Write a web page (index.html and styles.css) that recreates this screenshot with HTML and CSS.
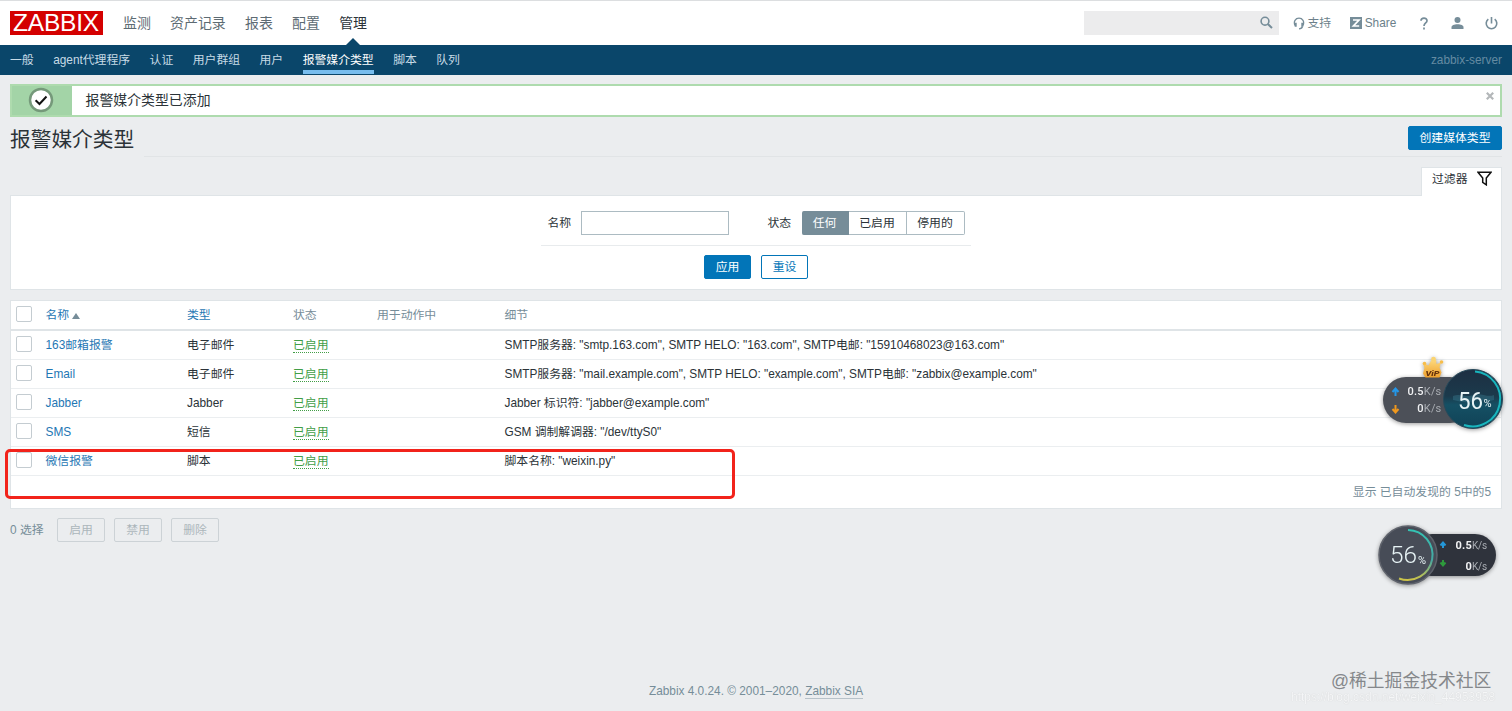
FILE: index.html
```html
<!DOCTYPE html>
<html lang="zh-CN">
<head>
<meta charset="utf-8">
<title>报警媒介类型</title>
<link rel="stylesheet" href="styles.css">
</head>
<body>
<header class="top">
  <div class="logo"><span>ZABBIX</span></div>
  <nav class="menu"><a>监测</a><a>资产记录</a><a>报表</a><a>配置</a><a class="active">管理</a></nav>
  <div class="search"><svg width="14" height="14" viewBox="0 0 14 14" fill="none" stroke="#768d99"><circle cx="6" cy="5.200" r="3.900" stroke-width="1.600"/><path d="M8.800 8L13 12" stroke-width="2"/></svg></div>
  <div class="tools">
    <a class="support"><svg width="12" height="13" viewBox="0 0 12 13" fill="none" stroke="#768d99" stroke-width="1.300"><path d="M2 8.500C.2 4.500 2.500 1.200 6 1.200S11.800 4.500 10 8.500"/><path d="M2.700 5.800v4M9.300 5.800v4" stroke-width="2"/><path d="M9.500 9.500C9 11.500 8 11.800 6 11.800"/></svg>支持</a>
    <a class="share"><svg width="12" height="12" viewBox="0 0 12 12"><path d="M0 0h12v12H0z" fill="#768d99"/><path d="M3 3h6L3.400 9H9.200" fill="none" stroke="#fff" stroke-width="1.700"/></svg>Share</a>
    <svg class="help" width="8" height="13" viewBox="0 0 8 13" fill="none" stroke="#768d99" stroke-width="1.700"><path d="M1 3.800C1 .3 7 .3 7 3.700 7 6 4 5.900 4 9"/><path d="M4 10.500v2"/></svg>
    <svg class="user" width="13" height="12" viewBox="0 0 13 12" fill="#768d99"><circle cx="6.500" cy="3" r="3"/><path d="M.5 12V10C.5 8.500 3 7.300 6.500 7.300S12.500 8.500 12.500 10v2z"/></svg>
    <svg class="power" width="13" height="13" viewBox="0 0 13 13" fill="none" stroke="#768d99" stroke-width="1.600"><path d="M3.300 2.200a5.300 5.300 0 1 0 6.400 0M6.500 0v6.500"/></svg>
  </div>
</header>
<nav class="sub">
  <a>一般</a><a>agent代理程序</a><a>认证</a><a>用户群组</a><a>用户</a><a class="active">报警媒介类型</a><a>脚本</a><a>队列</a>
  <span class="server">zabbix-server</span>
</nav>
<main>
  <div class="msg">
    <div class="msg-icon"><svg width="26" height="26" viewBox="0 0 26 26" fill="none"><circle cx="13" cy="13" r="11" fill="#fff" stroke="#75997a" stroke-width="2.500"/><path d="M7.600 13.200l3.900 3.800 7-7.500" stroke="#111" stroke-width="2"/></svg></div>
    <span class="msg-text">报警媒介类型已添加</span>
    <svg class="close" width="8" height="8" viewBox="0 0 8 8" stroke="#b3b7b9" stroke-width="2.200"><path d="M.8.8l6.400 6.400M7.200.8L.8 7.200"/></svg>
  </div>
  <div class="title"><h1>报警媒介类型</h1><div class="title-rest"><button class="btn create">创建媒体类型</button></div></div>
  <div class="tabs"><div class="tab">过滤器<svg width="15" height="15" viewBox="0 0 15 15" fill="none" stroke="#111" stroke-width="1.500"><path d="M1 1.200h13L9.300 7v6.800L5.700 11.300V7z"/></svg></div></div>
  <section class="filter">
    <div class="fields">
      <label class="name-label">名称</label><div class="input"></div>
      <label class="state-label">状态</label>
      <div class="radio"><span class="on">任何</span><span>已启用</span><span>停用的</span></div>
    </div>
    <div class="filter-btns"><button class="btn">应用</button><button class="btn alt">重设</button></div>
  </section>
  <section class="table">
    <div class="row head"><i class="cb"></i><a class="c1">名称<b class="sort"></b></a><a class="c2">类型</a><span class="c3">状态</span><span class="c4">用于动作中</span><span class="c5">细节</span></div>
    <div class="row"><i class="cb"></i><a class="c1">163邮箱报警</a><span class="c2">电子邮件</span><span class="c3"><a class="ok">已启用</a></span><span class="c4"></span><span class="c5">SMTP服务器: "smtp.163.com", SMTP HELO: "163.com", SMTP电邮: "15910468023@163.com"</span></div>
    <div class="row"><i class="cb"></i><a class="c1">Email</a><span class="c2">电子邮件</span><span class="c3"><a class="ok">已启用</a></span><span class="c4"></span><span class="c5">SMTP服务器: "mail.example.com", SMTP HELO: "example.com", SMTP电邮: "zabbix@example.com"</span></div>
    <div class="row"><i class="cb"></i><a class="c1">Jabber</a><span class="c2">Jabber</span><span class="c3"><a class="ok">已启用</a></span><span class="c4"></span><span class="c5">Jabber 标识符: "jabber@example.com"</span></div>
    <div class="row"><i class="cb"></i><a class="c1">SMS</a><span class="c2">短信</span><span class="c3"><a class="ok">已启用</a></span><span class="c4"></span><span class="c5">GSM 调制解调器: "/dev/ttyS0"</span></div>
    <div class="row"><i class="cb"></i><a class="c1">微信报警</a><span class="c2">脚本</span><span class="c3"><a class="ok">已启用</a></span><span class="c4"></span><span class="c5">脚本名称: "weixin.py"</span></div>
    <div class="paging">显示 已自动发现的 5中的5</div>
    <div class="highlight"></div>
  </section>
  <div class="actions"><span>0 选择</span><button>启用</button><button>禁用</button><button>删除</button></div>
</main>
<footer>Zabbix 4.0.24. © 2001–2020, <a>Zabbix SIA</a></footer>

<div class="widget w1">
  <svg width="124" height="80" viewBox="0 0 124 80">
    <defs>
      <linearGradient id="gold" x1="0" y1="0" x2="0" y2="1"><stop offset="0" stop-color="#ffe28a"/><stop offset="1" stop-color="#efa02c"/></linearGradient>
      <linearGradient id="sea" x1="0" y1="0" x2="0" y2="1"><stop offset="0" stop-color="#1d2f42"/><stop offset=".45" stop-color="#1b3a4c"/><stop offset=".6" stop-color="#155064"/><stop offset="1" stop-color="#104256"/></linearGradient>
    </defs>
    <rect x="3" y="22" width="90" height="46" rx="23" fill="#4c5058"/>
    <g transform="translate(1.500 0)">
      <path d="M43 13l-1.500-5 5.500 2.500 3-5.500 1.500-3 3 2.500.5 4.500 4.500-1.500-1.500 5 2 5-2 5H44l-2.500-4z" fill="url(#gold)"/>
      <circle cx="52" cy="4" r="2.300" fill="#fbd470"/><circle cx="43" cy="8.500" r="1.800" fill="#f7bd4a"/><circle cx="60" cy="7" r="1.800" fill="#f7bd4a"/>
      <text x="44" y="20.500" class="vip" textLength="14" lengthAdjust="spacingAndGlyphs">ViP</text>
    </g>
    <circle cx="93" cy="44" r="29.500" fill="url(#sea)" stroke="#27495a"/>
    <path d="M73 41c8-3 12 2 20-1s14 3 21 0v5c-8 3-14-2-21 1s-13 0-20-1z" fill="#38758a" opacity=".45"/>
    <path d="M95 16.500A27.500 27.500 0 1 1 84 70" fill="none" stroke="#18b5bd" stroke-width="2"/>
    <path d="M15.500 41v-7M12.500 37l3-3.500 3 3.500" fill="none" stroke="#2497e8" stroke-width="2"/>
    <path d="M15.500 50v7M12.500 54l3 3.500 3-3.500" fill="none" stroke="#f0981d" stroke-width="2"/>
    <text x="61.500" y="40" text-anchor="end" class="speed">0.5<tspan class="unit">K/s</tspan></text>
    <text x="61.500" y="57" text-anchor="end" class="speed">0<tspan class="unit">K/s</tspan></text>
    <text x="78" y="53.500" class="big" textLength="25" lengthAdjust="spacingAndGlyphs">56</text><text x="103.500" y="52" class="pct">%</text>
  </svg>
</div>
<div class="widget w2">
  <svg width="124" height="66" viewBox="0 0 124 66">
    <defs><linearGradient id="arc" x1="0" y1="0" x2="0" y2="1"><stop offset="0" stop-color="#34c3b4"/><stop offset=".6" stop-color="#46a7a2"/><stop offset="1" stop-color="#cfc447"/></linearGradient></defs>
    <rect x="36" y="12" width="85" height="42" rx="21" fill="#2f333c"/>
    <circle cx="33" cy="33" r="29" fill="#474c57" stroke="#5f636c" stroke-width="1.500"/>
    <path d="M33 8A25 25 0 1 1 24 56.500" fill="none" stroke="url(#arc)" stroke-width="2"/>
    <path d="M68 26v-5M65.500 23.500l2.500-3 2.500 3" fill="none" stroke="#2497d8" stroke-width="2"/>
    <path d="M68 38v5M65.500 40.500l2.500 3 2.500-3" fill="none" stroke="#2e9b3c" stroke-width="2"/>
    <text x="112" y="27" text-anchor="end" class="speed bold">0.5<tspan class="unit">K/s</tspan></text>
    <text x="112" y="48" text-anchor="end" class="speed bold">0<tspan class="unit">K/s</tspan></text>
    <text x="15" y="41" class="big light" textLength="27" lengthAdjust="spacingAndGlyphs">56</text><text x="43" y="42" class="pct">%</text>
  </svg>
</div>
<div class="mark-url">https://blog.csdn.net/weixin_44953958</div>
<div class="mark">@稀土掘金技术社区</div>
</body>
</html>
```
FILE: styles.css
```css
* { box-sizing: border-box; }
body {
  margin: 0; height: 711px; overflow: hidden; position: relative;
  display: flex; flex-direction: column;
  background: #ebedef; color: #2b3338;
  font: 11.85px/16px "Liberation Sans", "Noto Sans CJK SC", sans-serif;
}
button { font: inherit; margin: 0; padding: 0; white-space: nowrap; }
a { color: #1f77b4; }
svg { display: block; flex: none; }

.top { height: 45px; flex: none; display: flex; align-items: center; background: #fff; border-top: 1px solid #dcdee0; padding: 0 10px; }
.logo { width: 93px; height: 24px; background: #d40000; color: #fff; display: flex; align-items: center; justify-content: center; padding-right: 1px; }
.logo span { font-size: 24.500px; line-height: 24px; letter-spacing: -.2px; }
.menu { display: flex; gap: 19.200px; margin-left: 20px; font-size: 13.950px; }
.menu a { color: #5d6b73; line-height: 42px; position: relative; }
.menu .active { color: #2b3338; }
.menu .active::after { content: ""; position: absolute; left: 6px; bottom: -2px; border: solid transparent; border-width: 0 8px 8px; border-bottom-color: #0a466a; }
.search { width: 195px; height: 24px; background: #ececed; margin-left: auto; display: flex; align-items: center; justify-content: flex-end; padding-right: 6px; }
.tools { width: 223px; display: flex; align-items: center; padding-left: 14px; }
.tools a { display: flex; align-items: center; gap: 2.500px; color: #6c7f8a; }
.share { margin-left: 19px; }
.help { margin-left: 24px; }
.user { margin-left: 23px; }
.power { margin-left: 21px; }

.sub { height: 30px; flex: none; display: flex; gap: 19.450px; padding: 0 10px; background: #0a466a; }
.sub a { color: #c7dbe6; line-height: 30px; height: 29px; white-space: nowrap; }
.sub .active { color: #fff; border-bottom: 4px solid #78bdee; }
.server { margin-left: auto; color: #648ba2; line-height: 30px; }

main { padding: 9px 10px 0; flex: none; }
.msg { height: 32.500px; display: flex; background: #fff; border: 2px solid #aedbae; position: relative; }
.msg-icon { width: 60px; background: #a3d4a7; display: flex; align-items: center; justify-content: center; padding-right: 2px; }
.msg-text { font-size: 13.900px; line-height: 29px; margin-left: 13.500px; }
.close { position: absolute; right: 6px; top: 6px; }
.title { height: 50.500px; display: flex; align-items: flex-start; }
h1 { margin: 0; font-weight: 400; font-size: 20.700px; line-height: 41px; padding-top: 2px; width: 134px; white-space: nowrap; }
.title-rest { flex: 1; height: 40px; display: flex; justify-content: flex-end; border-bottom: 1px solid #e1e4e6; }
.btn { height: 24px; border: 1px solid #0275b8; border-radius: 2px; background: #0275b8; color: #fff; width: 47px; }
.btn.create { width: 94px; margin-top: 9px; }
.btn.alt { background: #fff; color: #0275b8; }
.tabs { display: flex; justify-content: flex-end; height: 28px; }
.tab { width: 81px; height: 29px; position: relative; display: flex; gap: 9.500px; align-items: center; padding: 0 0 7px 10px; background: #fff; border: 1px solid #dfe4e7; border-bottom: 0; }
.filter { height: 95px; background: #fff; border: 1px solid #dfe4e7; display: flex; flex-direction: column; align-items: center; }
.fields { width: 430px; height: 50px; display: flex; align-items: center; padding: 5px 6px 0 7px; border-bottom: 1px solid #e8ebed; margin-right: 1px; }
.fields label { width: 24px; flex: none; white-space: nowrap; }
.input { width: 148px; height: 24px; border: 1px solid #acbbc2; margin-left: 9px; flex: none; }
.fields .state-label { margin-left: 39px; }
.radio { display: flex; height: 24px; margin-left: 10px; flex: none; }
.radio span { width: 58px; border: 1px solid #acbbc2; border-left-width: 0; text-align: center; line-height: 22px; }
.radio span:last-child { border-radius: 0 2px 2px 0; }
.radio .on { width: 47px; background: #768d99; border-color: #768d99; color: #fff; border-radius: 2px 0 0 2px; }
.filter-btns { display: flex; gap: 10px; margin-top: 9px; }

.table { margin-top: 10px; height: 208.500px; background: #fff; border: 1px solid #dfe4e7; position: relative; }
.row { height: 29.100px; display: flex; align-items: center; padding-left: 5px; border-bottom: 1px solid #ebeef0; white-space: nowrap; }
.row.head { height: 30px; border-bottom: 2px solid #dfe4e7; color: #768d99; }
.cb { width: 16px; height: 16px; border: 1px solid #c4ccd1; border-radius: 2px; flex: none; margin: -3px 13.500px 0 0; background: #fff; }
.c1 { width: 141.500px; }
.c2 { width: 106px; }
.c3 { width: 84px; }
.c4 { width: 127.500px; }
.c5 { letter-spacing: -.02px; }
.c1, .c2, .c3, .c4 { flex: none; }
.sort { display: inline-block; margin-left: 3px; border: solid transparent; border-width: 0 4px 6px; border-bottom-color: #768d99; }
.ok { color: #429e47; display: inline-block; line-height: 14px; border-bottom: 1px dotted #429e47; }
.paging { text-align: right; line-height: 33px; padding-right: 10px; color: #768d99; }
.highlight { position: absolute; left: -6px; top: 148px; width: 730px; height: 50px; border: 3px solid #f2231b; border-radius: 5px; }
.actions { display: flex; align-items: center; margin-top: 9px; color: #768d99; }
.actions span { width: 47px; }
.actions button { width: 48px; height: 24px; margin-right: 9px; border: 1px solid #ccd2d6; border-radius: 2px; background: transparent; color: #acb6bb; line-height: 23px; }
footer { margin-top: auto; height: 28px; text-align: center; color: #768d99; }
footer a { color: #768d99; display: inline-block; line-height: 14px; border-bottom: 1px solid #b7c2c9; }

.widget { position: absolute; filter: drop-shadow(0 1px 2px #0006); }
.w1 { left: 1380px; top: 355px; }
.w2 { left: 1375px; top: 522px; }
.speed { font: 500 11px Roboto, sans-serif; fill: #f0f1f3; letter-spacing: .2px; }
.bold { font-weight: 700; }
.unit { fill: #a9adb3; font-weight: 400; }
.bold .unit { font-size: 10px; letter-spacing: -.2px; }
.big { font: 400 24px Roboto, sans-serif; fill: #e7f3f5; }
.light { font-weight: 300; }
.pct { font: 400 11px Roboto, sans-serif; fill: #e7f3f5; }
.vip { font: italic 900 8px Roboto, sans-serif; fill: #68340c; }
.mark, .mark-url { position: absolute; white-space: nowrap; }
.mark { left: 1331px; top: 668px; font-size: 17.800px; line-height: 26px; color: #85888b; }
.mark-url { left: 1291px; top: 689px; font-size: 12px; color: #f8f9fa; text-shadow: 0 0 1px #bbb; opacity: .8; }
```
